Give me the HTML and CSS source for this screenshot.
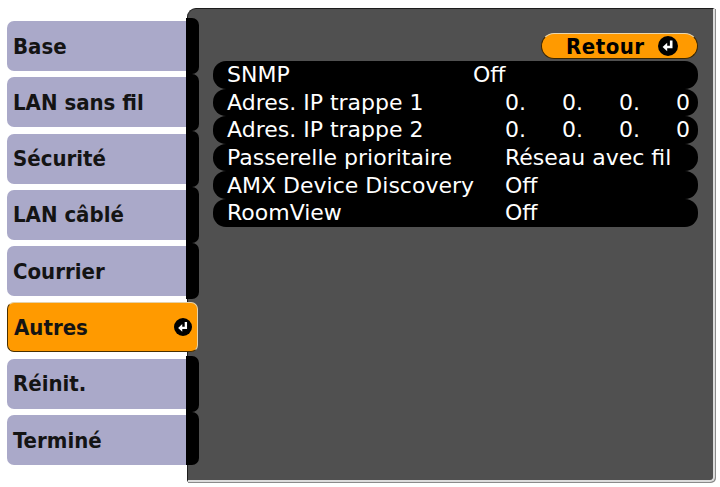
FILE: index.html
```html
<!DOCTYPE html>
<html lang="fr">
<head>
<meta charset="utf-8">
<title>Autres</title>
<link rel="stylesheet" href="styles.css">
</head>
<body>
<div class="screen">
  <nav class="tabs">
    <div class="row"><div class="tab">Base</div><div class="notch"></div></div>
    <div class="row"><div class="tab">LAN sans fil</div><div class="notch"></div></div>
    <div class="row"><div class="tab">Sécurité</div><div class="notch"></div></div>
    <div class="row"><div class="tab">LAN câblé</div><div class="notch"></div></div>
    <div class="row"><div class="tab">Courrier</div><div class="notch"></div></div>
    <div class="row active"><div class="tab">Autres
      <svg class="enter enter-sm" viewBox="0 0 20 20" aria-hidden="true"><circle cx="10" cy="10" r="10" fill="#000"/><path d="M13.2 4.5V11H8" fill="none" stroke="#fff" stroke-width="2.6"/><path d="M4.6 11L9.2 6.8V15.2Z" fill="#fff"/></svg>
    </div></div>
    <div class="row"><div class="tab">Réinit.</div><div class="notch"></div></div>
    <div class="row last"><div class="tab">Terminé</div><div class="notch"></div></div>
  </nav>
  <section class="panel">
    <div class="toolbar">
      <div class="back"><span>Retour</span>
        <svg class="enter" viewBox="0 0 20 20" aria-hidden="true"><circle cx="10" cy="10" r="10" fill="#000"/><path d="M13.2 4.5V11H8" fill="none" stroke="#fff" stroke-width="2.6"/><path d="M4.6 11L9.2 6.8V15.2Z" fill="#fff"/></svg>
      </div>
    </div>
    <ul class="list">
      <li class="item"><span class="label">SNMP</span><span class="value shifted">Off</span></li>
      <li class="item"><span class="label">Adres. IP trappe 1</span><span class="value ip"><span>0.</span><span>0.</span><span>0.</span><span>0</span></span></li>
      <li class="item"><span class="label">Adres. IP trappe 2</span><span class="value ip"><span>0.</span><span>0.</span><span>0.</span><span>0</span></span></li>
      <li class="item"><span class="label">Passerelle prioritaire</span><span class="value">Réseau avec fil</span></li>
      <li class="item"><span class="label">AMX Device Discovery</span><span class="value">Off</span></li>
      <li class="item"><span class="label">RoomView</span><span class="value">Off</span></li>
    </ul>
  </section>
</div>
</body>
</html>
```

FILE: styles.css
```css
html, body {
  margin: 0;
  padding: 0;
  background: #fff;
}

body {
  font-family: "DejaVu Sans Condensed", "DejaVu Sans", sans-serif;
  font-weight: bold;
  font-size: 22px;
}

.screen {
  display: flex;
  width: 720px;
  height: 487px;
  overflow: hidden;
}

.tabs {
  position: relative;
  z-index: 1;
  flex: none;
  width: 192px;
  margin-left: 7px;
  padding-top: 18px;
}

.row {
  display: flex;
  height: 56.3px;
}

.tab {
  box-sizing: border-box;
  width: 179px;
  height: 50px;
  margin-top: 3px;
  padding-left: 6px;
  display: flex;
  align-items: center;
  background: #aaa9c9;
  color: #141414;
  border-radius: 7px 0 0 7px;
}

.notch {
  width: 13px;
  height: 56.3px;
  background: #000;
  border-radius: 0 7px 7px 0;
}

.row.last .notch {
  height: 53px;
}

.row.active .tab {
  width: 191px;
  justify-content: space-between;
  padding-right: 5px;
  background: #ff9a00;
  border: 1px solid #4a3000;
  border-top-color: #e6d2a8;
  border-right-color: #e6d2a8;
  border-radius: 7px;
}

.enter {
  width: 20px;
  height: 20px;
  flex: none;
}

.enter-sm {
  width: 18px;
  height: 18px;
}

.panel {
  box-sizing: border-box;
  flex: none;
  width: 528px;
  height: 474px;
  margin-left: -12px;
  margin-top: 8px;
  padding: 24px 15px 0 25px;
  background: #505050;
  border-top: 1px solid #1c1c1c;
  border-left: 1px solid #1c1c1c;
  border-right: 2px solid #dcdcdc;
  border-bottom: 2px solid #dcdcdc;
  border-radius: 9px 0 5px 0;
  box-shadow: 1px 1px 0 #8a8a8a;
}

.toolbar {
  display: flex;
  justify-content: flex-end;
  margin-bottom: 2px;
}

.back {
  box-sizing: border-box;
  width: 157px;
  height: 26px;
  display: flex;
  align-items: center;
  gap: 13px;
  padding-left: 24px;
  background: #ff9a00;
  color: #000;
  border: 1px solid #3a2600;
  border-top-color: #e8d6b0;
  border-radius: 13px;
  letter-spacing: 0.5px;
}

.list {
  list-style: none;
  margin: 0;
  padding: 0;
  font-family: "DejaVu Sans", sans-serif;
  font-weight: normal;
}

.item {
  box-sizing: border-box;
  display: flex;
  align-items: center;
  height: 27.6px;
  padding-left: 14px;
  background: #000;
  color: #fff;
  border-radius: 13px;
  white-space: nowrap;
}

.label {
  width: 278px;
  flex: none;
}

.value.shifted {
  margin-left: -32px;
}

.ip {
  display: grid;
  grid-template-columns: 57px 57px 57px auto;
}
```
